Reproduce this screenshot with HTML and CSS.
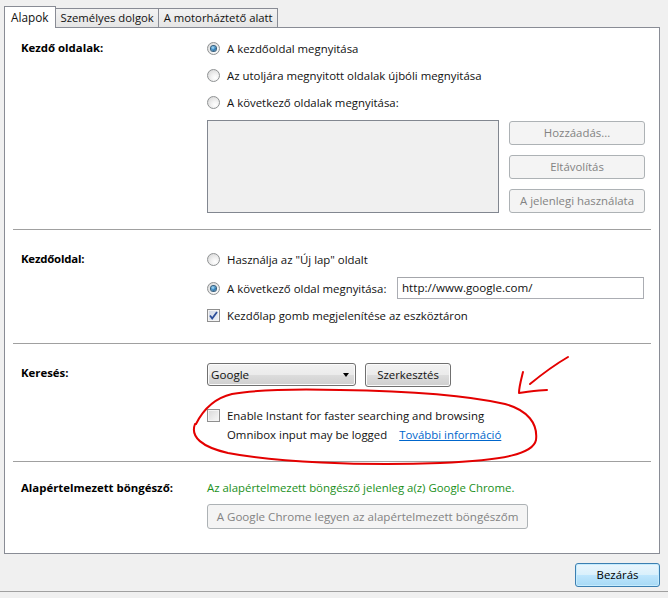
FILE: index.html
```html
<!DOCTYPE html>
<html lang="hu">
<head>
<meta charset="utf-8">
<title>Beállítások</title>
<link rel="stylesheet" href="styles.css">
</head>
<body>
<div class="tabs">
  <div class="tab active">Alapok</div>
  <div class="tab">Személyes dolgok</div>
  <div class="tab">A motorháztető alatt</div>
</div>
<div class="panel">
  <div class="section s1">
    <div class="label">Kezdő oldalak:</div>
    <div class="content">
      <div class="opts">
        <div class="opt"><span class="radio on"></span><span>A kezdőoldal megnyitása</span></div>
        <div class="opt"><span class="radio"></span><span>Az utoljára megnyitott oldalak újbóli megnyitása</span></div>
        <div class="opt"><span class="radio"></span><span>A következő oldalak megnyitása:</span></div>
      </div>
      <div class="listrow">
        <div class="listbox"></div>
        <div class="btncol">
          <div class="btn disabled wide">Hozzáadás...</div>
          <div class="btn disabled wide">Eltávolítás</div>
          <div class="btn disabled wide">A jelenlegi használata</div>
        </div>
      </div>
    </div>
  </div>
  <div class="sep"></div>
  <div class="section s2">
    <div class="label narrow">Kezdőoldal:</div>
    <div class="content">
      <div class="opt"><span class="radio"></span><span>Használja az "Új lap" oldalt</span></div>
      <div class="opt urlrow"><span class="radio on"></span><span class="urllabel">A következő oldal megnyitása:</span><div class="input">http://www.google.com/</div></div>
      <div class="opt cbrow"><span class="check on"><svg width="13" height="13" viewBox="0 0 13 13"><path d="M3 6.5 L5.2 9.5 L10 3" fill="none" stroke="#2b4d99" stroke-width="1.8"/></svg></span><span>Kezdőlap gomb megjelenítése az eszköztáron</span></div>
    </div>
  </div>
  <div class="sep"></div>
  <div class="section s3">
    <div class="label">Keresés:</div>
    <div class="content">
      <div class="searchrow">
        <div class="select"><span>Google</span><span class="caret"></span></div>
        <div class="btn normal">Szerkesztés</div>
      </div>
      <div class="instant">
        <span class="check"></span>
        <div class="instanttext">
          <div>Enable Instant for faster searching and browsing</div>
          <div>Omnibox input may be logged <a class="link" href="#">További információ</a></div>
        </div>
      </div>
    </div>
  </div>
  <div class="sep"></div>
  <div class="section s4">
    <div class="label">Alapértelmezett böngésző:</div>
    <div class="content">
      <div class="green">Az alapértelmezett böngésző jelenleg a(z) Google Chrome.</div>
      <div class="btn disabled defbtn">A Google Chrome legyen az alapértelmezett böngészőm</div>
    </div>
  </div>
</div>
<div class="footer">
  <div class="btn primary">Bezárás</div>
</div>
<svg class="scribble" width="668" height="598" viewBox="0 0 668 598">
  <path d="M196 424 C 203 410, 215 398, 232 394 C 260 389, 300 389, 340 390 C 410 391, 470 396, 505 404 C 528 410, 538 424, 536 440 C 533 454, 505 460, 440 463 C 360 466, 275 462, 228 453 C 202 447, 190 437, 195 424" fill="none" stroke="#e40000" stroke-width="2" stroke-linecap="round" stroke-linejoin="round"/>
  <path d="M568 357 C 556 364, 541 375, 530 384" fill="none" stroke="#e40000" stroke-width="2" stroke-linecap="round"/>
  <path d="M523 372 C 521 380, 519 387, 519 393 C 528 392, 538 390, 547 390" fill="none" stroke="#e40000" stroke-width="2" stroke-linecap="round" stroke-linejoin="round"/>
</svg>
</body>
</html>
```
FILE: styles.css
```css
html, body {
  margin: 0;
  padding: 0;
}
body {
  width: 668px;
  height: 598px;
  background: #f0f0f0;
  font-family: "Open Sans", "Noto Sans", sans-serif;
  font-size: 11.4px;
  color: #111;
  position: relative;
  overflow: hidden;
}
.tabs {
  display: flex;
  align-items: flex-end;
  height: 22px;
  padding: 6px 0 0 4px;
  position: relative;
  z-index: 2;
}
.tab {
  box-sizing: border-box;
  height: 19px;
  margin-bottom: 1px;
  padding: 0 4px 0 5px;
  line-height: 18px;
  border: 1px solid #898c95;
  border-bottom: none;
  border-left: none;
  background: linear-gradient(#f3f3f3, #e5e5e5);
  font-size: 11.3px;
  white-space: nowrap;
}
.tab.active {
  height: 22px;
  margin-bottom: 0;
  padding: 0 6px;
  line-height: 20px;
  background: #fff;
  border-left: 1px solid #898c95;
  font-size: 11.8px;
}
.panel {
  margin: -1px 8px 0 4px;
  background: #fff;
  border: 1px solid #898c95;
  height: 525px;
  box-sizing: content-box;
  display: flex;
  flex-direction: column;
}
.section {
  display: grid;
  grid-template-columns: 186px 1fr;
  padding: 0 15px 0 16px;
}
.label {
  font-weight: bold;
  line-height: 20px;
  white-space: nowrap;
  color: #000;
}
.label.narrow {
  letter-spacing: -0.2px;
}
.sep {
  height: 1px;
  background: #a0a0a0;
  margin: 0 8px;
  flex: none;
}
.s1 { padding-top: 10px; padding-bottom: 16px; }
.s2 { padding-top: 19px; padding-bottom: 18px; }
.s3 { padding-top: 19px; padding-bottom: 17px; }
.s4 { padding-top: 16px; }
.opts {
  display: flex;
  flex-direction: column;
  gap: 7px;
}
.opt {
  display: flex;
  align-items: center;
  height: 20px;
  white-space: nowrap;
}
.radio {
  flex: none;
  box-sizing: border-box;
  width: 13px;
  height: 13px;
  margin-right: 7px;
  border: 1px solid #8f9293;
  border-radius: 50%;
  background: radial-gradient(circle at 65% 70%, #ffffff 0%, #f2f2f2 35%, #d2d2d2 100%);
  display: inline-flex;
  align-items: center;
  justify-content: center;
}
.radio.on::after {
  content: "";
  width: 5px;
  height: 5px;
  border-radius: 50%;
  background: radial-gradient(circle at 40% 35%, #b8e6fb 0%, #3d8cc6 45%, #12466e 100%);
  box-shadow: 0 0 0 1px #365f7d;
}
.check {
  flex: none;
  box-sizing: border-box;
  width: 13px;
  height: 13px;
  margin-right: 7px;
  border: 1px solid #8f8f8f;
  background: linear-gradient(135deg, #d8d8d8, #f8f8f8);
  box-shadow: inset 0 0 0 1px #f4f4f4;
  display: inline-flex;
  align-items: center;
  justify-content: center;
}
.check.on {
  background: linear-gradient(135deg, #cfd6e4, #eef2f8);
}
.check svg {
  flex: none;
  margin: -1px;
}
.listrow {
  display: flex;
  gap: 10px;
  margin-top: 8px;
}
.listbox {
  box-sizing: border-box;
  width: 292px;
  height: 93px;
  background: #f0f0f0;
  border: 1px solid #828790;
}
.btncol {
  display: flex;
  flex-direction: column;
  gap: 10px;
  padding-top: 1px;
}
.btn {
  box-sizing: border-box;
  height: 24px;
  line-height: 22px;
  text-align: center;
  border-radius: 3px;
  white-space: nowrap;
}
.btn.wide {
  width: 136px;
}
.btn.disabled {
  color: #838383;
  background: #f4f4f4;
  border: 1px solid #adb2b5;
}
.btn.normal {
  width: 86px;
  border: 1px solid #707070;
  background: linear-gradient(#f2f2f2 0%, #ebebeb 50%, #dddddd 51%, #cfcfcf 100%);
  box-shadow: inset 0 0 0 1px #fbfbfb;
  margin-left: 9px;
}
.btn.primary {
  width: 85px;
  color: #000;
  border: 1px solid #3c7fb1;
  background: linear-gradient(#eaf6fd 0%, #d9f0fc 50%, #bee6fd 51%, #a7d9f5 100%);
  box-shadow: inset 0 0 0 1px #c6ecfe;
}
.urlrow {
  height: 22px;
  margin-top: 8px;
}
.urllabel {
  width: 170px;
  flex: none;
}
.input {
  box-sizing: border-box;
  flex: 1;
  height: 22px;
  line-height: 20px;
  padding-left: 4px;
  border: 1px solid #abadb3;
  border-top-color: #a4a6ab;
  background: #fff;
  font-size: 11.6px;
}
.cbrow {
  margin-top: 6px;
}
.searchrow {
  display: flex;
  align-items: flex-start;
}
.select {
  box-sizing: border-box;
  width: 149px;
  height: 23px;
  border: 1px solid #707070;
  border-radius: 3px;
  background: linear-gradient(#f2f2f2 0%, #ebebeb 50%, #dddddd 51%, #cfcfcf 100%);
  box-shadow: inset 0 0 0 1px #fbfbfb;
  display: flex;
  align-items: center;
  justify-content: space-between;
  padding: 0 6px 0 3px;
  font-size: 11.6px;
}
.caret {
  width: 0;
  height: 0;
  border-left: 3.5px solid transparent;
  border-right: 3.5px solid transparent;
  border-top: 4px solid #000;
}
.instant {
  display: flex;
  align-items: flex-start;
  margin-top: 19px;
  line-height: 19px;
}
.instant .check {
  margin-top: 3px;
}
.link {
  color: #0066cc;
  text-decoration: underline;
  margin-left: 9px;
}
.green {
  color: #1a8f1a;
  line-height: 20px;
  white-space: nowrap;
}
.defbtn {
  width: 321px;
  height: 25px;
  line-height: 23px;
  margin-top: 6px;
  font-size: 11.6px;
}
.footer {
  display: flex;
  justify-content: flex-end;
  box-sizing: border-box;
  height: 38px;
  padding: 9px 8px 0 0;
  border-bottom: 1px solid #a0a0a0;
}
.scribble {
  position: absolute;
  left: 0;
  top: 0;
  pointer-events: none;
  z-index: 5;
}
```
